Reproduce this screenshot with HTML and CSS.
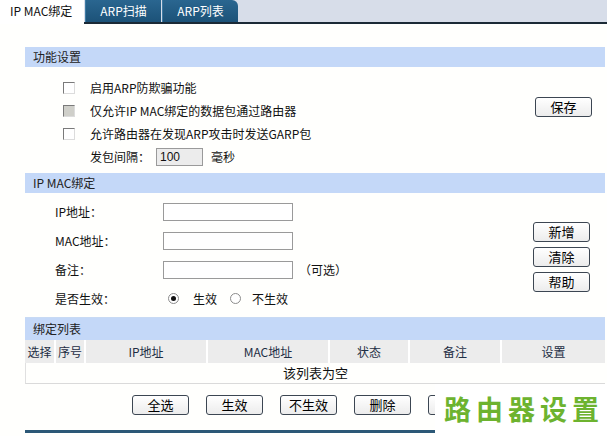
FILE: index.html
```html
<!DOCTYPE html>
<html lang="zh">
<head>
<meta charset="utf-8">
<title>IP MAC绑定</title>
<link rel="stylesheet" href="styles.css">
</head>
<body>
<div class="tabs">
  <div class="tab active">IP MAC绑定</div>
  <div class="tab">ARP扫描</div>
  <div class="tab last">ARP列表</div>
</div>
<div class="content">
  <div class="sec-head">功能设置</div>
  <div class="sec-body body1">
    <div class="rows1">
      <div class="row1"><span class="cb"></span><span>启用ARP防欺骗功能</span></div>
      <div class="row1"><span class="cb dis"></span><span>仅允许IP MAC绑定的数据包通过路由器</span></div>
      <div class="row1"><span class="cb"></span><span>允许路由器在发现ARP攻击时发送GARP包</span></div>
      <div class="row1 indent"><span>发包间隔：</span><span class="num">100</span><span>毫秒</span></div>
    </div>
    <div class="btn save">保存</div>
  </div>

  <div class="sec-head">IP MAC绑定</div>
  <div class="sec-body body2">
    <div class="form2">
      <div class="row2"><span class="lbl">IP地址：</span><span class="inp"></span></div>
      <div class="row2"><span class="lbl">MAC地址：</span><span class="inp"></span></div>
      <div class="row2"><span class="lbl">备注：</span><span class="inp"></span><span class="opt">（可选）</span></div>
      <div class="row2"><span class="lbl">是否生效：</span><span class="radio on"></span><span class="rtext">生效</span><span class="radio second"></span><span class="rtext">不生效</span></div>
    </div>
    <div class="btncol">
      <div class="btn">新增</div>
      <div class="btn">清除</div>
      <div class="btn">帮助</div>
    </div>
  </div>

  <div class="sec-head list-head">绑定列表</div>
  <div class="thead">
    <div class="th c1">选择</div>
    <div class="th c2">序号</div>
    <div class="th c3">IP地址</div>
    <div class="th c4">MAC地址</div>
    <div class="th c5">状态</div>
    <div class="th c6">备注</div>
    <div class="th c7">设置</div>
  </div>
  <div class="empty">该列表为空</div>
  <div class="btnrow">
    <div class="btn">全选</div>
    <div class="btn">生效</div>
    <div class="btn">不生效</div>
    <div class="btn">删除</div>
    <div class="btn"></div>
  </div>
  <div class="bottom-line"></div>
</div>
<div class="watermark">路由器设置</div>
</body>
</html>
```

FILE: styles.css
```css
* { box-sizing: border-box; }
html, body { margin: 0; padding: 0; }
body {
  width: 607px;
  height: 436px;
  overflow: hidden;
  background: #fffffd;
  font-family: "Noto Sans CJK SC", "Liberation Sans", sans-serif;
  font-size: 12px;
  color: #111;
  position: relative;
}
.tabs {
  display: flex;
  height: 24px;
  background: #d7dde9;
  border-bottom: 2px solid #1b2a36;
}
.tab {
  width: 76px;
  height: 22px;
  line-height: 22px;
  text-align: center;
  color: #fff;
  background: linear-gradient(#2a6690, #1c5278);
  border-left: 1px solid #3d7aa3;
  margin-right: 1px;
}
.tab.last { border-top-right-radius: 6px; }
.tab.active {
  width: 84px;
  height: 24px;
  margin-right: 1px;
  background: #fff;
  color: #111;
  border: none;
  text-align: left;
  padding-left: 10px;
}
.content {
  margin: 23px 2px 0 25px;
}
.sec-head {
  height: 20px;
  line-height: 20px;
  background: #c4d8f8;
  padding-left: 8px;
  color: #222;
}
.sec-body {
  display: flex;
  justify-content: space-between;
}
.body1 { height: 106px; padding-top: 9px; }
.rows1 { display: flex; flex-direction: column; }
.row1 {
  height: 23px;
  display: flex;
  align-items: center;
  padding-left: 38px;
}
.row1.indent { padding-left: 65px; }
.cb {
  width: 12px;
  height: 12px;
  border: 1px solid;
  border-color: #7a7a7a #dcdcdc #dcdcdc #7a7a7a;
  background: #fff;
  margin-right: 15px;
}
.cb.dis { background: #cfcfc9; }
.num {
  width: 47px;
  height: 18px;
  line-height: 16px;
  border: 1px solid #9a9a9a;
  background: #ececec;
  padding-left: 3px;
  margin: 0 8px 0 6px;
  font-family: "Liberation Sans", sans-serif;
}
.btn {
  width: 57px;
  height: 20px;
  line-height: 18px;
  text-align: center;
  font-size: 13px;
  border: 1px solid #3c4652;
  border-radius: 3px;
  background: linear-gradient(#ffffff, #ececec);
  color: #000;
}
.save { margin: 21px 13px 0 0; }
.body2 {
  height: 125px;
  padding-top: 4px;
  border-bottom: 1px solid #c8daf4;
}
.form2 { display: flex; flex-direction: column; }
.row2 {
  height: 29px;
  display: flex;
  align-items: center;
  padding-left: 30px;
}
.lbl { width: 108px; }
.inp {
  width: 130px;
  height: 18px;
  border: 1px solid #9a9a9a;
  background: #fff;
}
.opt { margin-left: 6px; }
.radio {
  width: 11px;
  height: 11px;
  border: 1px solid #8c8c8c;
  border-radius: 50%;
  background: #fff;
  margin-left: 5px;
  margin-right: 14px;
  position: relative;
}
.radio.second { margin-left: 13px; margin-right: 11px; }
.radio.on::after {
  content: "";
  position: absolute;
  left: 2px;
  top: 2px;
  width: 5px;
  height: 5px;
  border-radius: 50%;
  background: #111;
}
.btncol {
  display: flex;
  flex-direction: column;
  gap: 5px;
  margin: 25px 15px 0 0;
}
.list-head { height: 22px; line-height: 22px; }
.thead {
  display: flex;
  height: 23px;
  background: #ececec;
}
.th {
  line-height: 23px;
  text-align: center;
  color: #1e2e44;
  border-right: 2px solid #fff;
}
.th.c7 { border-right: none; flex: 1; }
.c1 { width: 31px; }
.c2 { width: 30px; }
.c3 { width: 122px; }
.c4 { width: 122px; }
.c5 { width: 80px; }
.c6 { width: 92px; }
.empty {
  height: 21px;
  line-height: 20px;
  text-align: center;
  border-left: 1px solid #e0e0e0;
  border-bottom: 1px solid #dadada;
  font-size: 13px;
}
.btnrow {
  display: flex;
  gap: 17px;
  padding: 11px 0 15px 107px;
}
.bottom-line {
  height: 3px;
  background: #2c5877;
}
.watermark {
  position: absolute;
  left: 435px;
  top: 384px;
  width: 172px;
  height: 52px;
  background: #fff;
  color: #6db32f;
  font-size: 27px;
  font-weight: bold;
  letter-spacing: 5px;
  padding-left: 9px;
  line-height: 50px;
  font-family: "Noto Sans CJK SC", sans-serif;
}
```
